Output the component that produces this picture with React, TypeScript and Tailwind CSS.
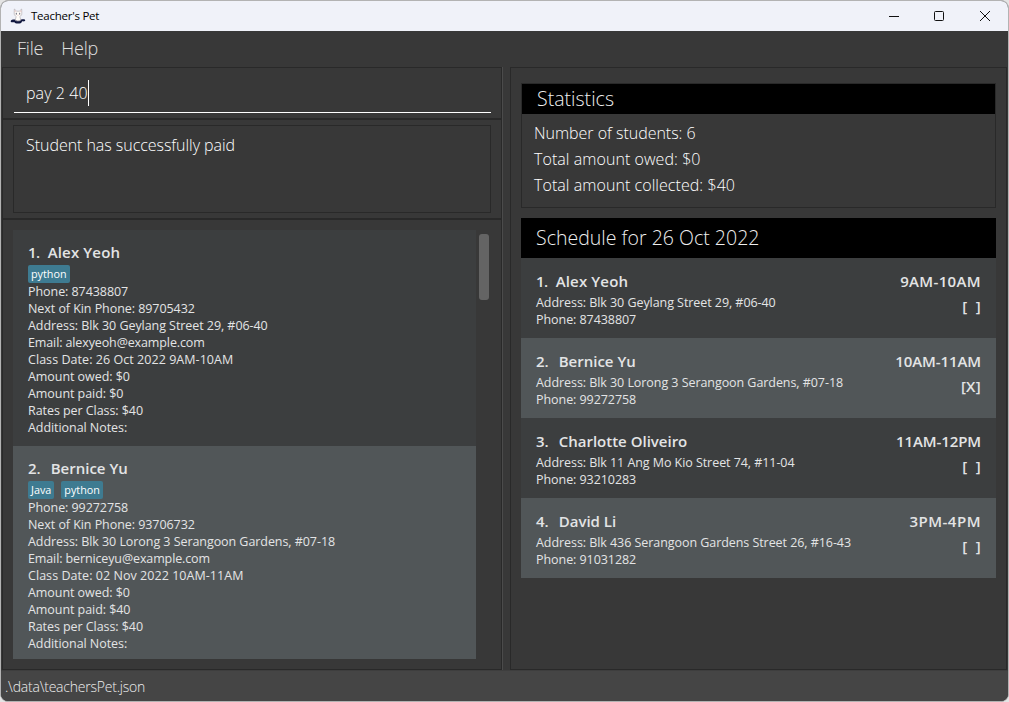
import React from "react";

type Student = { name: string; tags: string[]; lines: string[] };
type Lesson = { name: string; address: string; phone: string; time: string; mark: string; spacing: string };

const students: Student[] = [
  {
    name: "Alex Yeoh",
    tags: ["python"],
    lines: [
      "Phone: 87438807",
      "Next of Kin Phone: 89705432",
      "Address: Blk 30 Geylang Street 29, #06-40",
      "Email: alexyeoh@example.com",
      "Class Date: 26 Oct 2022 9AM-10AM",
      "Amount owed: $0",
      "Amount paid: $0",
      "Rates per Class: $40",
      "Additional Notes:",
    ],
  },
  {
    name: "Bernice Yu",
    tags: ["Java", "python"],
    lines: [
      "Phone: 99272758",
      "Next of Kin Phone: 93706732",
      "Address: Blk 30 Lorong 3 Serangoon Gardens, #07-18",
      "Email: berniceyu@example.com",
      "Class Date: 02 Nov 2022 10AM-11AM",
      "Amount owed: $0",
      "Amount paid: $40",
      "Rates per Class: $40",
      "Additional Notes:",
    ],
  },
];

const lessons: Lesson[] = [
  { name: "Alex Yeoh", address: "Blk 30 Geylang Street 29, #06-40", phone: "87438807", time: "9AM-10AM", mark: "[  ]", spacing: "tracking-[0.350px]" },
  { name: "Bernice Yu", address: "Blk 30 Lorong 3 Serangoon Gardens, #07-18", phone: "99272758", time: "10AM-11AM", mark: "[X]", spacing: "tracking-[-0.100px]" },
  { name: "Charlotte Oliveiro", address: "Blk 11 Ang Mo Kio Street 74, #11-04", phone: "93210283", time: "11AM-12PM", mark: "[  ]", spacing: "tracking-[-0.100px]" },
  { name: "David Li", address: "Blk 436 Serangoon Gardens Street 26, #16-43", phone: "91031282", time: "3PM-4PM", mark: "[  ]", spacing: "tracking-[0.500px]" },
];

function CatLogo() {
  return (
    <svg className="ml-[9px] h-4 w-4" viewBox="0 0 16 16">
      <path d="M.6 13.200c.8-2 3-1.700 4.400-1.700h6c2 0 4-.8 4.300 1.100-1.300 1.400-2.300.4-3.300.9-.3 1.800-2 2-4 2s-3.400-.4-3.500-1.300c-1.500.2-3.700.3-3.900-1Z" fill="#11183f" />
      <path d="M4.200 5 4.300 1l2.400 2.200h2.600L11.700 1l.1 4.200c.2 1.600-.8 2.600-2 3.300l1 3.600c-1 1.200-4.600 1.200-5.600 0l1-3.600C5 7.800 4 6.800 4.200 5Z" fill="#fffdf9" stroke="#aaa5aa" strokeWidth=".6" />
      <path d="M6.300 4.800v1.800M9.700 4.800v1.800" stroke="#555468" strokeWidth=".9" />
      <path d="M5.200 2.500v1.500M10.800 2.500v1.500M7.500 7.300h1" stroke="#e4b3b2" strokeWidth=".7" />
    </svg>
  );
}

function TitleBar() {
  return (
    <header className="flex h-[30px] shrink-0 items-center bg-[#f0f2f9]">
      <CatLogo />
      <span className="ml-[5px] text-[11.500px] tracking-[-0.250px] text-black">Teacher's Pet</span>
      <svg className="ml-auto h-[10px] w-[10px]" viewBox="0 0 10 10" stroke="#111" fill="none">
        <path d="M0 5.500h10" />
      </svg>
      <svg className="ml-[35px] h-[10px] w-[10px]" viewBox="0 0 10 10" stroke="#111" fill="none">
        <rect x=".5" y=".5" width="9" height="9" rx="1" />
      </svg>
      <svg className="mr-[18px] ml-[36px] h-[10px] w-[10px]" viewBox="0 0 10 10" stroke="#111" fill="none">
        <path d="m0 0 10 10M10 0 0 10" />
      </svg>
    </header>
  );
}

function Heading({ index, name }: { index: number; name: string }) {
  return (
    <div className={`flex h-[21px] items-center text-[15px] font-semibold whitespace-nowrap ${index === 1 ? "gap-[8px]" : "gap-[10px]"}`}>
      <span className={index === 1 ? "tracking-[-0.500px]" : "tracking-normal"}>{index}.</span>
      <span className={index === 1 ? "tracking-[0.150px]" : "tracking-normal"}>{name}</span>
    </div>
  );
}

function Detail({ text }: { text: string }) {
  const spacing = text.startsWith("Class Date")
    ? "tracking-[0.050px]"
    : text.startsWith("Email")
      ? "tracking-[-0.120px]"
      : "tracking-[-0.060px]";
  return <p className={`h-[17px] text-[12.500px] leading-[17px] whitespace-nowrap ${spacing}`}>{text}</p>;
}

function StudentCell({ student, index }: { student: Student; index: number }) {
  return (
    <li className={`h-[216px] shrink-0 pt-[12px] pl-[15px] text-[#e3e4e5] ${index % 2 ? "bg-[#3c3e3f]" : "bg-[#515658]"}`}>
      <Heading index={index} name={student.name} />
      <div className="mt-[2px] flex gap-[7px]">
        {student.tags.map((tag) => (
          <span key={tag} className="flex h-[18px] items-center rounded-[2px] bg-[#3e7b91] px-[3px] text-[10.800px] leading-none text-white">
            {tag}
          </span>
        ))}
      </div>
      {student.lines.map((line) => (
        <Detail key={line} text={line} />
      ))}
    </li>
  );
}

function LessonCell({ lesson, index }: { lesson: Lesson; index: number }) {
  return (
    <li className={`flex h-20 justify-between px-[15px] pt-[13px] text-[#e3e4e5] ${index % 2 ? "bg-[#3c3e3f]" : "bg-[#515658]"}`}>
      <div>
        <Heading index={index} name={lesson.name} />
        <div className="mt-[2px]">
          <Detail text={`Address: ${lesson.address}`} />
          <Detail text={`Phone: ${lesson.phone}`} />
        </div>
      </div>
      <div className="text-right text-[15px] font-semibold whitespace-pre">
        <p className={`leading-[21px] ${lesson.spacing}`}>{lesson.time}</p>
        <p className="mt-[4px] leading-[21px] tracking-[0.300px]">{lesson.mark}</p>
      </div>
    </li>
  );
}

function LeftPane() {
  return (
    <div className="flex w-[501px] shrink-0 flex-col border-r border-[#4b4b4b]">
      <section className="h-[52px] shrink-0 border border-[#292929] pr-[10px] pl-[11px]">
        <div className="flex h-[45px] items-center border-b border-white pt-[6px] pl-[12px]">
          <span className="text-[16px] font-light tracking-[0.080px] text-white">pay 2 40</span>
          <span className="h-[26px] w-px bg-white" />
        </div>
      </section>
      <section className="h-[100px] shrink-0 border border-[#292929] px-[10px] pt-[5px]">
        <div className="h-[88px] border border-[#292929] pt-[7px] pl-[12px] text-[16px] leading-[24px] font-light tracking-[-0.040px] text-white">
          Student has successfully paid
        </div>
      </section>
      <section className="flex min-h-0 flex-1 border border-[#292929] pt-[10px] pb-[10px] pl-[10px]">
        <ol className="flex h-full w-[463px] flex-col overflow-hidden">
          {students.map((student, i) => (
            <StudentCell key={student.name} student={student} index={i + 1} />
          ))}
        </ol>
        <div className="mt-[4px] ml-[3px] h-[66px] w-[10px] rounded-[3px] bg-[#646464]" />
      </section>
    </div>
  );
}

function RightPane() {
  return (
    <div className="ml-[7px] w-[497px] border border-[#292929] px-[10px] pt-[15px]">
      <section className="h-[125px] border border-[#292929]">
        <h2 className="flex h-[30px] items-center bg-black pl-[15px] text-[19.500px] font-light tracking-[0.020px] text-[#efefef]">Statistics</h2>
        <div className="pt-[6px] pl-[12px] text-[16px] leading-[26px] font-light tracking-[0.060px] text-white">
          <p className="tracking-[-0.020px]">Number of students: 6</p>
          <p>Total amount owed: $0</p>
          <p>Total amount collected: $40</p>
        </div>
      </section>
      <section className="mt-[10px]">
        <h2 className="flex h-10 items-center bg-black pl-[15px] text-[19.500px] font-light tracking-[0.020px] text-[#efefef]">Schedule for 26 Oct 2022</h2>
        <ol>
          {lessons.map((lesson, i) => (
            <LessonCell key={lesson.name} lesson={lesson} index={i + 1} />
          ))}
        </ol>
      </section>
    </div>
  );
}

export default function App() {
  return (
    <div className="h-[702px] w-[1009px] overflow-hidden bg-[#e4e4e4] font-['Open_Sans','Noto_Sans',sans-serif]">
      <div className="flex h-[702px] w-[1009px] flex-col overflow-hidden rounded-[8px] border border-[#b3b3b3] bg-[#383838]">
        <TitleBar />
        <nav className="flex h-[36px] shrink-0 items-center gap-[18px] pb-[2px] pl-[16px] text-[18px] font-light tracking-[-0.200px] text-[#e0e0e0]">
          <span>File</span>
          <span>Help</span>
        </nav>
        <main className="flex h-[603px] shrink-0 pl-px">
          <LeftPane />
          <RightPane />
        </main>
        <footer className="flex flex-1 items-center border-t border-[#3e3e3e] bg-[#454545] pl-[4px] text-[14px] font-light tracking-[-0.220px] text-[#eeeeee]">
          .\data\teachersPet.json
        </footer>
      </div>
    </div>
  );
}
